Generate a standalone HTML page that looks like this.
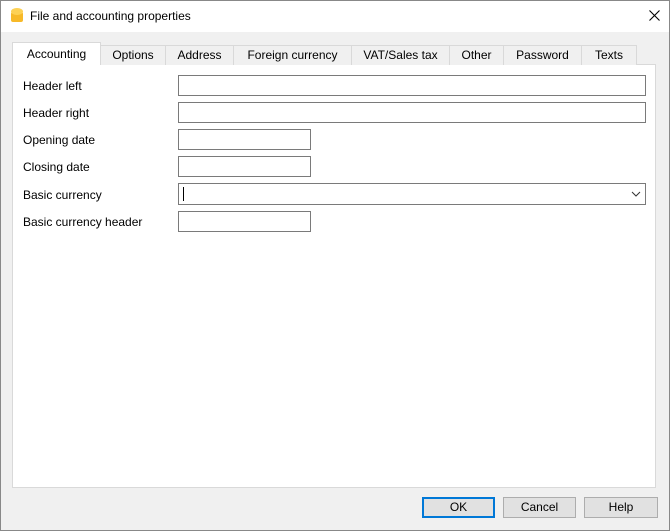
<!DOCTYPE html><html><head><style>
*{box-sizing:border-box;margin:0;padding:0}
body{width:670px;height:531px;font-family:"Liberation Sans",sans-serif;font-size:12px;color:#000;background:#f0f0f0;position:relative;overflow:hidden}
.frame{position:absolute;left:0;top:0;width:670px;height:531px;border:1px solid #888;z-index:9;pointer-events:none}
.title{position:absolute;left:0;top:0;width:670px;height:32px;background:#fff}
.title span{position:absolute;left:30px;top:9px;font-size:12px}
.pane{position:absolute;left:12px;top:64px;width:644px;height:424px;background:#fff;border:1px solid #d9d9d9}
.tab{position:absolute;top:45px;height:20px;background:#f0f0f0;border:1px solid #d9d9d9;border-bottom:none;text-align:center;line-height:18px}
.tab.sel{top:42px;height:23px;background:#fff;line-height:22px;z-index:2}
.lbl{position:absolute;left:23px}
.in{position:absolute;left:178px;height:21px;border:1px solid #7a7a7a;background:#fff}
.btn{position:absolute;top:497px;height:21px;background:#e1e1e1;border:1px solid #adadad;text-align:center;line-height:18px}
</style></head><body><div class="frame"></div>
<div class="title"><svg style="position:absolute;left:10px;top:7px" width="14" height="16"><rect x="1" y="5" width="12" height="10" rx="2" fill="#f7b928"/><ellipse cx="7" cy="4.5" rx="6" ry="3.5" fill="#fdd154"/></svg><span>File and accounting properties</span><svg style="position:absolute;left:649px;top:10px" width="11" height="11"><path d="M0.5 0.5L10.5 10.5M10.5 0.5L0.5 10.5" stroke="#000" stroke-width="1.1"/></svg></div>
<div class="pane"></div>
<div class="tab sel" style="left:12px;width:89px">Accounting</div>
<div class="tab" style="left:100px;width:66px">Options</div>
<div class="tab" style="left:165px;width:69px">Address</div>
<div class="tab" style="left:233px;width:119px">Foreign currency</div>
<div class="tab" style="left:351px;width:99px">VAT/Sales tax</div>
<div class="tab" style="left:449px;width:55px">Other</div>
<div class="tab" style="left:503px;width:79px">Password</div>
<div class="tab" style="left:581px;width:56px">Texts</div>
<div class="lbl" style="top:79px">Header left</div><div class="in" style="top:75px;width:468px"></div>
<div class="lbl" style="top:106px">Header right</div><div class="in" style="top:102px;width:468px"></div>
<div class="lbl" style="top:133px">Opening date</div><div class="in" style="top:129px;width:133px"></div>
<div class="lbl" style="top:160px">Closing date</div><div class="in" style="top:156px;width:133px"></div>
<div class="lbl" style="top:188px">Basic currency</div><div class="in" style="top:183px;width:468px;height:22px"><div style="position:absolute;left:4px;top:3px;width:1px;height:14px;background:#000"></div><svg style="position:absolute;right:4px;top:7px" width="10" height="6"><path d="M1 1L5 5L9 1" stroke="#333" fill="none"/></svg></div>
<div class="lbl" style="top:215px">Basic currency header</div><div class="in" style="top:211px;width:133px"></div>
<div class="btn" style="left:422px;width:73px;border:2px solid #0078d7;line-height:17px">OK</div>
<div class="btn" style="left:503px;width:73px">Cancel</div>
<div class="btn" style="left:584px;width:74px">Help</div>
</body></html>
